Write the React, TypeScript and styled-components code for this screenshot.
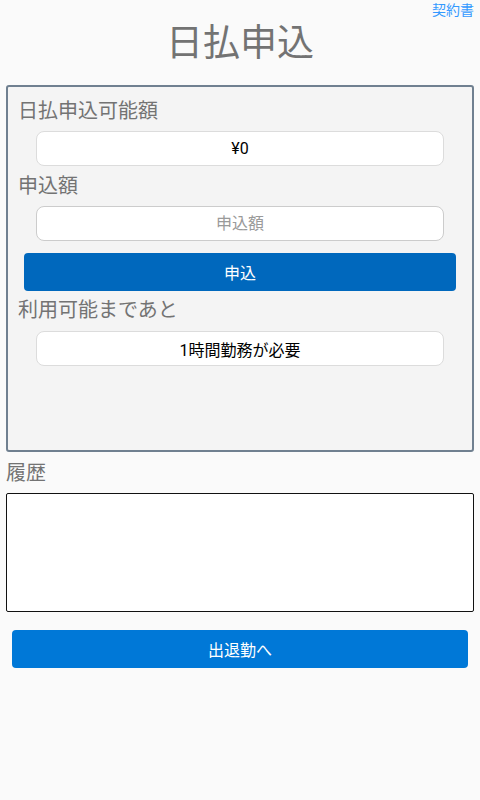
import React, { FunctionComponent } from 'react';
import styled, { createGlobalStyle } from 'styled-components';

const GlobalStyle = createGlobalStyle`
  html, body {
    margin: 0;
    padding: 0;
    background: #fafafa;
  }
  body {
    font-family: Roboto, 'Noto Sans CJK JP', sans-serif;
  }
  * {
    box-sizing: border-box;
  }
`;

const Page = styled.div`
  padding: 0 6px;
  min-height: 800px;
`;

const TopBar = styled.div`
  display: flex;
  justify-content: flex-end;
  height: 20px;
`;

const ContractLink = styled.a`
  color: #3399ff;
  font-size: 14px;
  line-height: 20px;
  text-decoration: none;
  cursor: pointer;
`;

const Title = styled.h1`
  margin: 0;
  text-align: center;
  font-size: 37px;
  font-weight: 400;
  line-height: 47px;
  color: #737373;
`;

const Card = styled.div`
  margin-top: 18px;
  min-height: 367px;
  padding: 9px 16px 0;
  border: 2px solid #708090;
  border-radius: 3px;
  background: #f4f4f4;
`;

const FieldLabel = styled.div<{ $top?: number }>`
  margin: ${(p) => p.$top ?? 0}px 0 0 -6px;
  font-size: 20px;
  line-height: 30px;
  color: #737373;
`;

const FieldRow = styled.div<{ $top?: number }>`
  margin: ${(p) => p.$top ?? 5}px 12px 0;
`;

const ValueBox = styled.div`
  height: 35px;
  display: flex;
  align-items: center;
  justify-content: center;
  background: #ffffff;
  border: 1px solid #dcdcdc;
  border-radius: 8px;
  font-size: 16px;
  color: #000000;
`;

const AmountInput = styled.input`
  width: 100%;
  height: 35px;
  display: block;
  background: #ffffff;
  border: 1px solid #cccccc;
  border-radius: 8px;
  text-align: center;
  font-family: inherit;
  font-size: 16px;
  color: #000000;
  outline: none;

  &::placeholder {
    color: #9a9a9a;
  }
`;

const ActionButton = styled.button<{ $tone: string; $top: number }>`
  display: block;
  width: 100%;
  height: 38px;
  margin-top: ${(p) => p.$top}px;
  border: none;
  border-radius: 4px;
  background: ${(p) => p.$tone};
  color: #ffffff;
  font-family: inherit;
  font-size: 16px;
  cursor: pointer;
`;

const HistoryLabel = styled.div`
  margin-top: 6px;
  font-size: 20px;
  line-height: 30px;
  color: #737373;
`;

const HistoryBox = styled.div`
  margin-top: 5px;
  height: 119px;
  background: #ffffff;
  border: 1px solid #111111;
  border-radius: 2px;
`;

const Footer = styled.div`
  padding: 0 6px;
`;

const App: FunctionComponent = () => {
  return (
    <>
      <GlobalStyle />
      <Page>
        <TopBar>
          <ContractLink>契約書</ContractLink>
        </TopBar>
        <Title>日払申込</Title>
        <Card>
          <FieldLabel>日払申込可能額</FieldLabel>
          <FieldRow>
            <ValueBox>¥0</ValueBox>
          </FieldRow>
          <FieldLabel $top={5}>申込額</FieldLabel>
          <FieldRow>
            <AmountInput placeholder="申込額" />
          </FieldRow>
          <ActionButton $tone="#0068bd" $top={12}>
            申込
          </ActionButton>
          <FieldLabel $top={4}>利用可能まであと</FieldLabel>
          <FieldRow $top={6}>
            <ValueBox>1時間勤務が必要</ValueBox>
          </FieldRow>
        </Card>
        <HistoryLabel>履歴</HistoryLabel>
        <HistoryBox />
        <Footer>
          <ActionButton $tone="#0078d7" $top={18}>
            出退勤へ
          </ActionButton>
        </Footer>
      </Page>
    </>
  );
};

export default App;
